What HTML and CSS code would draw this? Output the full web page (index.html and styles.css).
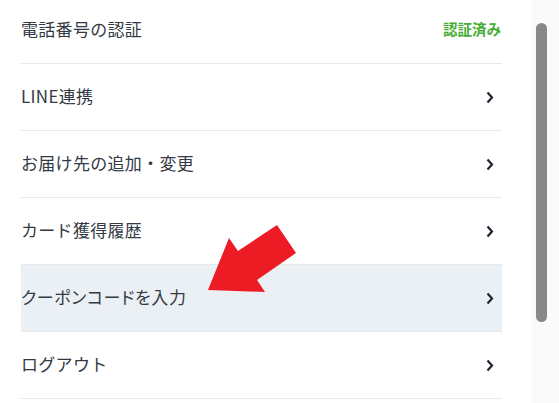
FILE: index.html
```html
<!DOCTYPE html>
<html lang="ja">
<head>
<meta charset="utf-8">
<link rel="stylesheet" href="styles.css">
</head>
<body>
<div class="page">
  <main class="content">
    <ul class="menu">
      <li class="row">
        <span class="label">電話番号の認証</span>
        <span class="status">認証済み</span>
      </li>
      <li class="row">
        <span class="label">LINE連携</span>
        <svg class="chev" viewBox="0 0 8 13" width="8" height="13"><path d="M1.5 1.5 L6 6.5 L1.5 11.5" fill="none" stroke="#1e2433" stroke-width="2.2"/></svg>
      </li>
      <li class="row">
        <span class="label">お届け先の追加・変更</span>
        <svg class="chev" viewBox="0 0 8 13" width="8" height="13"><path d="M1.5 1.5 L6 6.5 L1.5 11.5" fill="none" stroke="#1e2433" stroke-width="2.2"/></svg>
      </li>
      <li class="row">
        <span class="label">カード獲得履歴</span>
        <svg class="chev" viewBox="0 0 8 13" width="8" height="13"><path d="M1.5 1.5 L6 6.5 L1.5 11.5" fill="none" stroke="#1e2433" stroke-width="2.2"/></svg>
      </li>
      <li class="row row-active">
        <span class="label label-tight">クーポンコードを入力</span>
        <svg class="chev" viewBox="0 0 8 13" width="8" height="13"><path d="M1.5 1.5 L6 6.5 L1.5 11.5" fill="none" stroke="#1e2433" stroke-width="2.2"/></svg>
      </li>
      <li class="row">
        <span class="label">ログアウト</span>
        <svg class="chev" viewBox="0 0 8 13" width="8" height="13"><path d="M1.5 1.5 L6 6.5 L1.5 11.5" fill="none" stroke="#1e2433" stroke-width="2.2"/></svg>
      </li>
    </ul>
    <svg class="pointer" viewBox="0 0 559 403" width="559" height="403">
      <polygon points="208,290 229,238 238,251 277,225 296,253 257,280 265,292" fill="#ed1c24"/>
    </svg>
  </main>
  <div class="scrollbar"><div class="thumb"></div></div>
</div>
</body>
</html>
```
FILE: styles.css
```css
html, body {
  margin: 0;
  padding: 0;
  background: #ffffff;
  overflow: hidden;
}
.page {
  display: flex;
  width: 559px;
  height: 403px;
  font-family: "Noto Sans CJK JP", "Noto Sans", sans-serif;
}
.content {
  width: 532px;
  padding-left: 21px;
  box-sizing: border-box;
}
.menu {
  list-style: none;
  margin: -3px 0 0 0;
  padding: 0;
  width: 481px;
}
.row {
  height: 66px;
  border-bottom: 1px solid #e6e8eb;
  display: flex;
  align-items: center;
  justify-content: space-between;
  padding-right: 8px;
}
.row:first-child {
  padding-right: 1px;
}
.row-active {
  background: #ebf0f5;
}
.label {
  font-size: 17px;
  color: #333a44;
  letter-spacing: 0.3px;
  margin-bottom: 4px;
}
.label-tight {
  font-feature-settings: "palt";
  letter-spacing: 0.6px;
}
.status {
  font-size: 14.5px;
  font-weight: 700;
  color: #46ad34;
  margin-bottom: 4px;
}
.chev {
  display: block;
}
.pointer {
  position: absolute;
  left: 0;
  top: 0;
}
.scrollbar {
  width: 27px;
  height: 403px;
  background: #fafafa;
  padding-top: 23px;
  box-sizing: border-box;
}
.thumb {
  margin-left: 4px;
  width: 11px;
  height: 299px;
  background: #888888;
  border-radius: 6px;
}
```
